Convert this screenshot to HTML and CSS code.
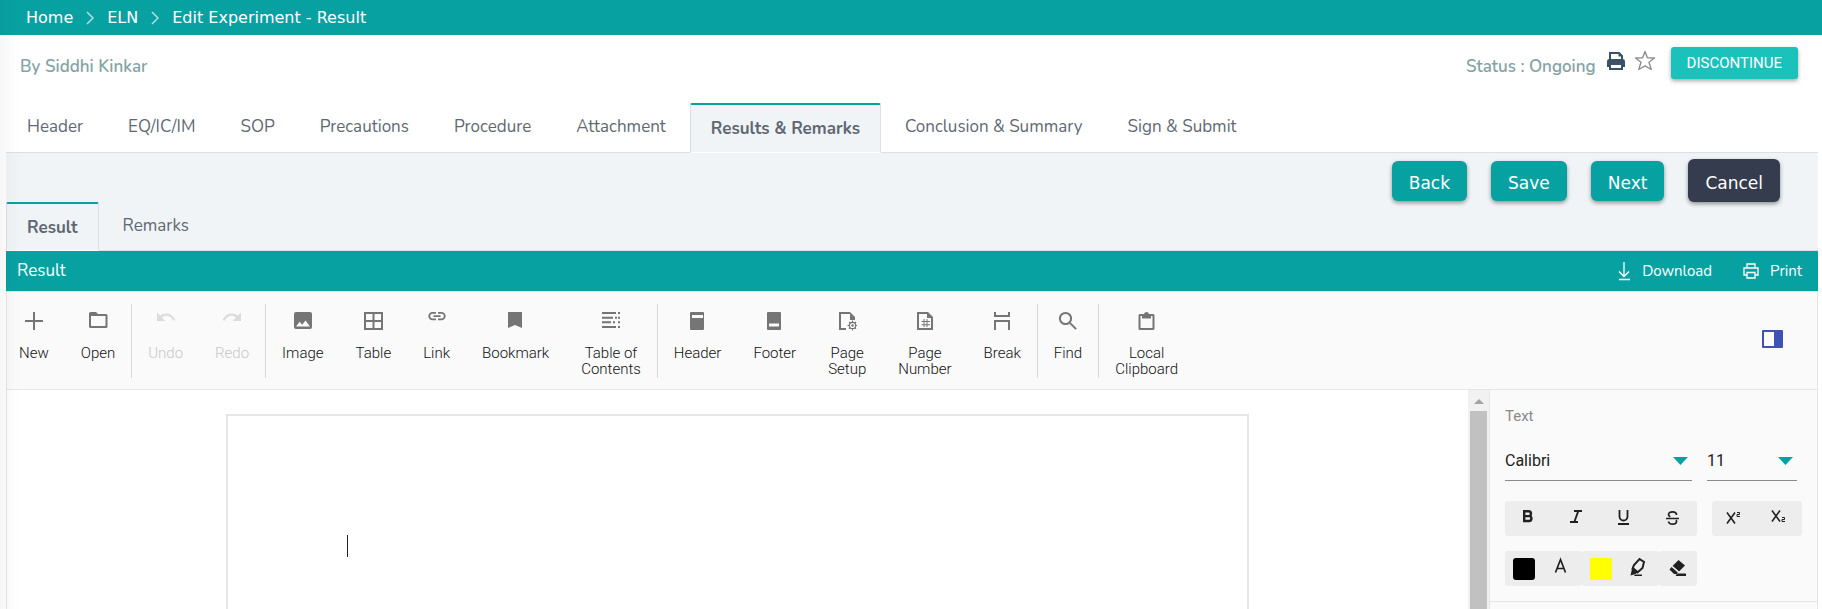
FILE: index.html
```html
<!DOCTYPE html>
<html lang="en">
<head>
<meta charset="utf-8">
<title>Edit Experiment - Result</title>
<meta name="viewport" content="width=device-width, initial-scale=1">
<link rel="stylesheet" href="styles.css">
</head>
<body>
<nav class="crumbs" aria-label="Breadcrumb">
  <a href="#">Home</a>
  <svg class="chevron" viewBox="0 0 8 14"><path d="M1 1l6 6-6 6"/></svg>
  <a href="#">ELN</a>
  <svg class="chevron" viewBox="0 0 8 14"><path d="M1 1l6 6-6 6"/></svg>
  <a href="#" aria-current="page">Edit Experiment - Result</a>
</nav>

<header class="meta">
  <span class="author">By Siddhi Kinkar</span>
  <span class="status">Status : Ongoing</span>
  <button class="icon-btn" type="button" aria-label="Print experiment">
    <svg width="20" height="20" viewBox="0 0 20 20"><path fill="#3b5166" fill-rule="evenodd" d="M3 1h10.500L17 4.500V8a2.500 2.500 0 0 1 2 2.500V16h-2v3H3v-3H1v-5.500A2.500 2.500 0 0 1 3 8zm2 2v5h10V5.500h-2.500V3zm0 11v3h10v-3z"/></svg>
  </button>
  <button class="icon-btn" type="button" aria-label="Mark as favourite">
    <svg width="22" height="22" viewBox="0 0 22 22"><path fill="none" stroke="#8e8e93" stroke-width="1.400" stroke-linejoin="round" d="M11 1.500l2.400 6.300 7 .2-5.400 4.300 2.200 7.200-6.200-3.600-6.200 3.600L7 12.300 1.600 8l7-.2z"/></svg>
  </button>
  <button class="discontinue" type="button">DISCONTINUE</button>
</header>

<main class="content">
  <nav class="tabs tabs-main" aria-label="Experiment sections">
    <a class="tab" href="#">Header</a>
    <a class="tab" href="#">EQ/IC/IM</a>
    <a class="tab" href="#">SOP</a>
    <a class="tab" href="#">Precautions</a>
    <a class="tab" href="#">Procedure</a>
    <a class="tab" href="#">Attachment</a>
    <a class="tab active" href="#" aria-current="page">Results &amp; Remarks</a>
    <a class="tab" href="#">Conclusion &amp; Summary</a>
    <a class="tab" href="#">Sign &amp; Submit</a>
  </nav>

  <div class="actions">
    <button class="btn" type="button">Back</button>
    <button class="btn" type="button">Save</button>
    <button class="btn" type="button">Next</button>
    <button class="btn btn-dark" type="button">Cancel</button>
  </div>

  <nav class="tabs tabs-sub" aria-label="Result sections">
    <a class="tab active" href="#" aria-current="page">Result</a>
    <a class="tab" href="#">Remarks</a>
  </nav>

  <section class="editor">
    <div class="titlebar">
      <h1>Result</h1>
      <button class="title-btn" type="button">
        <svg width="14" height="20" viewBox="0 0 14 20"><path d="M7 1v14M2 10.500l5 5 5-5M2 18.500h11"/></svg>
        Download
      </button>
      <button class="title-btn" type="button">
        <svg width="16" height="16" viewBox="0 0 16 16"><path d="M4 5V1h8v4M4 12H1V5h14v7h-3M4 9.500h8V15H4z"/></svg>
        Print
      </button>
    </div>

    <div class="toolbar">
      <button class="tool" type="button"><svg viewBox="0 0 20 20"><path d="M9 1h2v8h8v2h-8v8H9v-8H1V9h8z"/></svg>New</button>
      <button class="tool" type="button"><svg viewBox="0 0 20 20"><path fill-rule="evenodd" d="M2.500 1H8l2 2h8a1.500 1.500 0 0 1 1.500 1.500v11A1.500 1.500 0 0 1 18 17H2.500A1.500 1.500 0 0 1 1 15.500v-13A1.500 1.500 0 0 1 2.500 1zM3 5v10h14.500V5z"/></svg>Open</button>
      <span class="divider"></span>
      <button class="tool" type="button" disabled><svg viewBox="0 0 20 20"><path d="M1 1.500l3.200 3.200C8 1.200 15.500 1 19.500 9l-2 .8C14.500 4 9.500 3.500 6 6.500L9.500 10H1z"/></svg>Undo</button>
      <button class="tool" type="button" disabled><svg viewBox="0 0 20 20"><path d="M19 1.500l-3.200 3.200C12 1.200 4.500 1 .5 9l2 .8C5.500 4 10.500 3.500 14 6.500L10.500 10H19z"/></svg>Redo</button>
      <span class="divider"></span>
      <button class="tool" type="button"><svg viewBox="0 0 20 20"><path fill-rule="evenodd" d="M3 1h14a2 2 0 0 1 2 2v13a2 2 0 0 1-2 2H3a2 2 0 0 1-2-2V3a2 2 0 0 1 2-2zm0 14.500h14l-4.500-6-3.300 4.300-2.500-3z"/></svg>Image</button>
      <button class="tool" type="button"><svg viewBox="0 0 20 20"><path fill-rule="evenodd" d="M1 1h19v18H1zm2 2v6h6.500V3zm8.500 0v6H18V3zM3 11v6h6.500v-6zm8.500 0v6H18v-6z"/></svg>Table</button>
      <button class="tool" type="button"><svg viewBox="0 0 20 20"><path d="M9 9.300H5.500a4.150 4.150 0 0 1 0-8.300H9v1.800H5.500a2.350 2.350 0 0 0 0 4.700H9zM6.500 4.300h7v1.700h-7zM11 1h3.500a4.150 4.150 0 0 1 0 8.300H11V7.500h3.500a2.350 2.350 0 0 0 0-4.700H11z"/></svg>Link</button>
      <button class="tool" type="button"><svg viewBox="0 0 20 20"><path d="M2 1h14v16l-7-3-7 3z"/></svg>Bookmark</button>
      <button class="tool" type="button"><svg viewBox="0 0 20 20"><path d="M1 1h14v2H1zM1 5.700h11v2H1zM1 10.300h9v2H1zM1 15h14v2H1zM17 1h2v2h-2zM14 5.700h2v2h-2zM17 5.700h2v2h-2zM12 10.300h2v2h-2zM17 10.300h2v2h-2zM17 15h2v2h-2z"/></svg>Table of<br>Contents</button>
      <span class="divider"></span>
      <button class="tool" type="button"><svg viewBox="0 0 20 20"><path fill-rule="evenodd" d="M3 1h12a1 1 0 0 1 1 1v16a1 1 0 0 1-1 1H3a1 1 0 0 1-1-1V2a1 1 0 0 1 1-1zm1 3v3h11V4z"/></svg>Header</button>
      <button class="tool" type="button"><svg viewBox="0 0 20 20"><path fill-rule="evenodd" d="M3 1h12a1 1 0 0 1 1 1v16a1 1 0 0 1-1 1H3a1 1 0 0 1-1-1V2a1 1 0 0 1 1-1zm1 11.500v3h10v-3z"/></svg>Footer</button>
      <button class="tool" type="button"><svg viewBox="0 0 20 20"><path d="M2 1h11l5 5v3h-5V3H4v14h5v2H2z"/><circle cx="15.500" cy="14.500" r="3.200" fill="none" stroke="#757575" stroke-width="1.200"/><circle cx="15.500" cy="14.500" r="1.200"/><path d="M15 9.500h1v2h-1zM15 17.500h1v2h-1zM10.500 14h2v1h-2zM18.500 14h2v1h-2zM11.600 11.300l.8-.8 1.300 1.300-.8.800zM17.300 17l.8-.8 1.300 1.300-.8.800zM18.600 10.500l.8.800-1.300 1.300-.8-.8zM12.900 16.200l.8.800-1.300 1.300-.8-.8z"/></svg>Page<br>Setup</button>
      <button class="tool" type="button"><svg viewBox="0 0 20 20"><path fill-rule="evenodd" d="M2 1h11l5 5v13H2zm2 2v14h12V7h-4V3z"/><path d="M8.500 8h1v2h2V8h1v2H15v1h-2.500v2.200H15v1h-2.500V16h-1v-1.800h-2V16h-1v-1.800H6.500v-1h2V11h-2v-1h2zm1 3v2.200h2V11z" fill-rule="evenodd"/></svg>Page<br>Number</button>
      <button class="tool" type="button"><svg viewBox="0 0 20 20"><path d="M2 1h2v3h12V1h2v5H2zM2 9h16v10h-2v-8H4v8H2z"/></svg>Break</button>
      <span class="divider"></span>
      <button class="tool" type="button"><svg viewBox="0 0 20 20"><circle cx="7.500" cy="7.500" r="5.600" fill="none" stroke="#757575" stroke-width="2"/><path d="M11.200 12.600l1.400-1.400 6.200 6.200-1.400 1.400z"/></svg>Find</button>
      <span class="divider"></span>
      <button class="tool" type="button"><svg viewBox="0 0 20 20"><path fill-rule="evenodd" d="M3 3h4a2.600 2.600 0 0 1 5 0h4a1.500 1.500 0 0 1 1.500 1.500v13A1.500 1.500 0 0 1 16 19H3a1.500 1.500 0 0 1-1.500-1.500v-13A1.500 1.500 0 0 1 3 3zm.5 2v12h12V5H14v2.500H5V5z"/></svg>Local<br>Clipboard</button>
      <button class="pane-toggle" type="button" aria-label="Toggle properties pane">
        <svg width="21" height="18" viewBox="0 0 21 18"><path fill="#3f51b5" fill-rule="evenodd" d="M1 0h19a1 1 0 0 1 1 1v16a1 1 0 0 1-1 1H1a1 1 0 0 1-1-1V1a1 1 0 0 1 1-1zm1 2v14h10V2z"/></svg>
      </button>
    </div>

    <div class="workspace">
      <div class="canvas">
        <div class="page"><span class="caret"></span></div>
      </div>
      <div class="scrollbar">
        <svg width="10" height="5" viewBox="0 0 10 5"><path fill="#a3a3a3" d="M5 0l5 5H0z"/></svg>
        <div class="thumb"></div>
      </div>
      <aside class="props">
        <section class="text-props">
          <h2>Text</h2>
          <div class="prop-row">
            <div class="select select-font">
              <select aria-label="Font family"><option>Calibri</option></select>
              <svg width="15" height="8" viewBox="0 0 15 8"><path d="M0 0h15L7.500 8z"/></svg>
            </div>
            <div class="select select-size">
              <select aria-label="Font size"><option>11</option></select>
              <svg width="15" height="8" viewBox="0 0 15 8"><path d="M0 0h15L7.500 8z"/></svg>
            </div>
          </div>
          <div class="prop-row">
            <div class="group group-style">
              <button type="button" aria-label="Bold"><svg width="20" height="20" viewBox="0 0 20 20"><path fill="none" stroke="#212121" stroke-width="2.400" d="M6.200 4.200h4.300a2.400 2.400 0 0 1 0 4.900H6.200zM6.200 9.100h4.800a2.450 2.450 0 0 1 0 4.900H6.200z"/></svg></button>
              <button type="button" aria-label="Italic"><svg width="20" height="20" viewBox="0 0 20 20"><path fill="none" stroke="#212121" stroke-width="1.900" d="M8 4h8M4 15h8M12.300 4l-4 11"/></svg></button>
              <button type="button" aria-label="Underline"><svg width="20" height="20" viewBox="0 0 20 20"><path fill="none" stroke="#212121" stroke-width="1.800" d="M5.500 3v6.500a4 4 0 0 0 8 0V3M4 17h11"/></svg></button>
              <button type="button" aria-label="Strikethrough"><svg width="20" height="20" viewBox="0 0 20 20"><path fill="none" stroke="#212121" stroke-width="1.700" d="M4 11.500h13M14.500 8c0-4-8-4-8-.5 0 1.200.8 1.800 1.800 2.200M6.500 14.500c.5 3.500 8 3.500 8 0 0-.6-.1-1-.4-1.400"/></svg></button>
            </div>
            <div class="group group-script">
              <button type="button" aria-label="Superscript"><svg width="20" height="20" viewBox="0 0 20 20"><path fill="none" stroke="#212121" stroke-width="1.600" d="M4 5.500l8 11M12 5.500l-8 11"/><path fill="none" stroke="#212121" d="M14 5.500h2.500v2H14v2h3"/></svg></button>
              <button type="button" aria-label="Subscript"><svg width="20" height="20" viewBox="0 0 20 20"><path fill="none" stroke="#212121" stroke-width="1.600" d="M4 3.500l8 11M12 3.500l-8 11"/><path fill="none" stroke="#212121" d="M14 10.500h2.500v2H14v2h3"/></svg></button>
            </div>
          </div>
          <div class="prop-row">
            <div class="group group-color">
              <button type="button" aria-label="Font color value"><span class="swatch swatch-black"></span></button>
              <button type="button" aria-label="Font color"><svg width="20" height="20" viewBox="0 0 20 20"><path fill="none" stroke="#212121" stroke-width="1.700" d="M4.500 15.500l5-13 5 13M6.200 11.500h6.600"/></svg></button>
            </div>
            <div class="group group-color">
              <button type="button" aria-label="Highlight color value"><span class="swatch swatch-yellow"></span></button>
              <button type="button" aria-label="Highlight color"><svg width="20" height="20" viewBox="0 0 20 20"><path fill="none" stroke="#212121" stroke-width="2" d="M11.500 2l4.500 3-1.500 6-5 4.500-5-3.500 1.500-4z"/><path fill="#212121" d="M4.500 9.500l6 5-3 2.500L2.500 18.500zM7 17.500h7V19H6z"/></svg></button>
            </div>
            <div class="group group-clear">
              <button type="button" aria-label="Clear formatting"><svg width="20" height="20" viewBox="0 0 20 20"><path fill="#212121" d="M11.500 3l6.500 5.500-6 6L5.500 9zM4.500 10l6.300 5.500L9.500 17H7l-4.500-4.500zM10 16.500h9V19H8.500z"/><path stroke="#ededed" d="M4.500 8.500l7 6.300"/></svg></button>
            </div>
          </div>
        </section>
      </aside>
    </div>
  </section>
</main>
</body>
</html>
```
FILE: styles.css
```css
* {
  box-sizing: border-box;
}

body {
  margin: 0;
  height: 100vh;
  display: flex;
  flex-direction: column;
  overflow: hidden;
  background: #fff;
  color: #5f6872;
  font: 17px/24px Nunito, Lato, sans-serif;
}

body::before {
  content: "";
  position: absolute;
  inset: 0 auto 0 0;
  width: 20px;
  background: linear-gradient(90deg, rgba(0, 0, 0, 0.03), transparent);
  pointer-events: none;
}

a {
  color: inherit;
  text-decoration: none;
}

button {
  margin: 0;
  padding: 0;
  border: 0;
  background: none;
  color: inherit;
  font: inherit;
  cursor: pointer;
}

svg {
  display: block;
  flex: none;
}

.crumbs {
  flex: none;
  display: flex;
  align-items: center;
  gap: 13px;
  height: 35px;
  padding: 0 26px;
  background: #08a1a2;
  color: #fff;
  font: 16px/24px Verdana, "DejaVu Sans", sans-serif;
}

.chevron {
  width: 8px;
  height: 14px;
  fill: none;
  stroke: #b5dede;
  stroke-width: 1.5;
}

.meta {
  flex: none;
  display: flex;
  align-items: center;
  padding: 12px 24px 20px 20px;
  color: #84a3a4;
  font-weight: 600;
}

.author {
  flex: 1;
}

.author,
.status {
  padding-top: 3px;
}

.icon-btn {
  margin: 0 0 8px 8px;
}

.status + .icon-btn {
  margin-left: 10px;
}

.discontinue {
  height: 32px;
  margin: 0 0 4px 15px;
  padding: 0 16px;
  border-radius: 3px;
  background: #1bc1bb;
  box-shadow: 0 2px 4px rgba(0, 0, 0, 0.35);
  color: #fff;
  font: 15px/32px Roboto, sans-serif;
}

.content {
  flex: 1;
  min-height: 0;
  display: flex;
  flex-direction: column;
  margin: 0 4px 0 6px;
  background: #f0f4f7;
}

.tabs {
  flex: none;
  display: flex;
  gap: 3px;
  border-bottom: 1px solid #dbe0e5;
}

.tabs-main {
  background: #fff;
}

.tab {
  margin-bottom: -1px;
  padding: 11px 20px;
  border: 1px solid transparent;
}

.tab.active {
  padding-top: 12px;
  border-color: #dbe0e5;
  border-top: 2px solid #08a1a2;
  border-bottom-color: #fff;
  border-radius: 2px 2px 0 0;
  background: #f0f4f7;
  font-weight: 700;
}

.tabs-sub .tab {
  padding-bottom: 10px;
}

.actions {
  flex: none;
  display: flex;
  justify-content: flex-end;
  align-items: center;
  gap: 24px;
  padding: 6px 38px 0 0;
}

.btn {
  height: 40px;
  padding: 4px 17px 0;
  border-radius: 6px;
  background: #08a1a2;
  box-shadow: 0 2px 4px rgba(0, 0, 0, 0.4);
  color: #fff;
  font: 17px/24px Verdana, "DejaVu Sans", sans-serif;
}

.btn-dark {
  height: 43px;
  background: #343c4d;
}

.editor {
  flex: 1;
  min-height: 0;
  display: flex;
  flex-direction: column;
}

.titlebar {
  flex: none;
  display: flex;
  align-items: center;
  gap: 31px;
  height: 40px;
  padding: 0 16px 0 11px;
  background: #08a1a2;
  color: #fff;
}

.titlebar h1 {
  flex: 1;
  margin: 0;
  font: inherit;
}

.title-btn {
  display: flex;
  align-items: center;
  gap: 11px;
  font-size: 15px;
}

.title-btn svg {
  fill: none;
  stroke: #fff;
  stroke-width: 1.3;
}

.toolbar {
  flex: none;
  display: flex;
  align-items: flex-start;
  padding: 12px 0 11px;
  border: 1px solid #e6e6e6;
  background: #fafafa;
  color: #111;
  font: 300 15px/16px Roboto, sans-serif;
}

.tool {
  display: flex;
  flex-direction: column;
  align-items: center;
  min-height: 74px;
  padding: 7px 16px 0;
}

.tool:first-child {
  padding-left: 12px;
}

.tool svg {
  width: 20px;
  height: 20px;
  margin-bottom: 14px;
  fill: #757575;
}

.tool:disabled {
  color: #c8c8c8;
}

.tool:disabled svg {
  fill: #dcdcdc;
}

.divider {
  width: 1px;
  height: 74px;
  background: #d8d8d8;
}

.pane-toggle {
  margin: 26px 34px 0 auto;
}

.workspace {
  flex: 1;
  min-height: 0;
  display: flex;
  border: solid #e6e6e6;
  border-width: 0 1px;
  background: #fff;
  overflow: hidden;
}

.canvas {
  flex: 1;
  display: flex;
  justify-content: center;
  padding-top: 24px;
}

.page {
  width: 70%;
  min-height: 1000px;
  padding: 119px;
  border: 2px solid #e6e6e6;
}

.caret {
  display: block;
  width: 1px;
  height: 22px;
  background: #212121;
}

.scrollbar {
  flex: none;
  display: flex;
  flex-direction: column;
  align-items: center;
  gap: 7px;
  width: 21px;
  padding-top: 9px;
  background: #f1f1f1;
}

.thumb {
  flex: 1;
  width: 17px;
  background: #c1c1c1;
}

.props {
  flex: none;
  width: 328px;
  border-left: 1px solid #e6e6e6;
  background: #fafafa;
  font: 15px/20px Roboto, sans-serif;
}

.text-props {
  display: flex;
  flex-direction: column;
  gap: 15px;
  padding: 16px 15px 15px;
  border-bottom: 1px solid #e6e6e6;
}

.props h2 {
  margin: 0;
  color: #8a8a8a;
  font: inherit;
}

.prop-row {
  display: flex;
}

.select {
  display: flex;
  align-items: center;
  height: 40px;
  margin-bottom: 5px;
  padding-right: 4px;
  border-bottom: 1px solid #8a8a8a;
}

.select select {
  flex: 1;
  min-width: 0;
  height: 34px;
  padding: 0;
  border: 0;
  appearance: none;
  background: transparent;
  color: #212121;
  font: 16px/24px Roboto, sans-serif;
}

.select svg {
  fill: #08a1a2;
}

.select-font {
  width: 187px;
  margin-right: 15px;
}

.select-size {
  width: 90px;
}

.group {
  display: flex;
  height: 35px;
  border-radius: 3px;
  background: #ededed;
}

.group button {
  flex: 1;
  display: flex;
  justify-content: center;
  align-items: center;
}

.group svg {
  margin: 0 3px 3px 0;
}

.group-style {
  width: 192px;
  margin-right: 15px;
}

.group-script {
  width: 90px;
}

.group-color {
  width: 77px;
}

.group-clear {
  width: 38px;
}

.swatch {
  width: 22px;
  height: 22px;
}

.swatch-black {
  border-radius: 3px;
  background: #000;
}

.swatch-yellow {
  background: #ff0;
}
```
